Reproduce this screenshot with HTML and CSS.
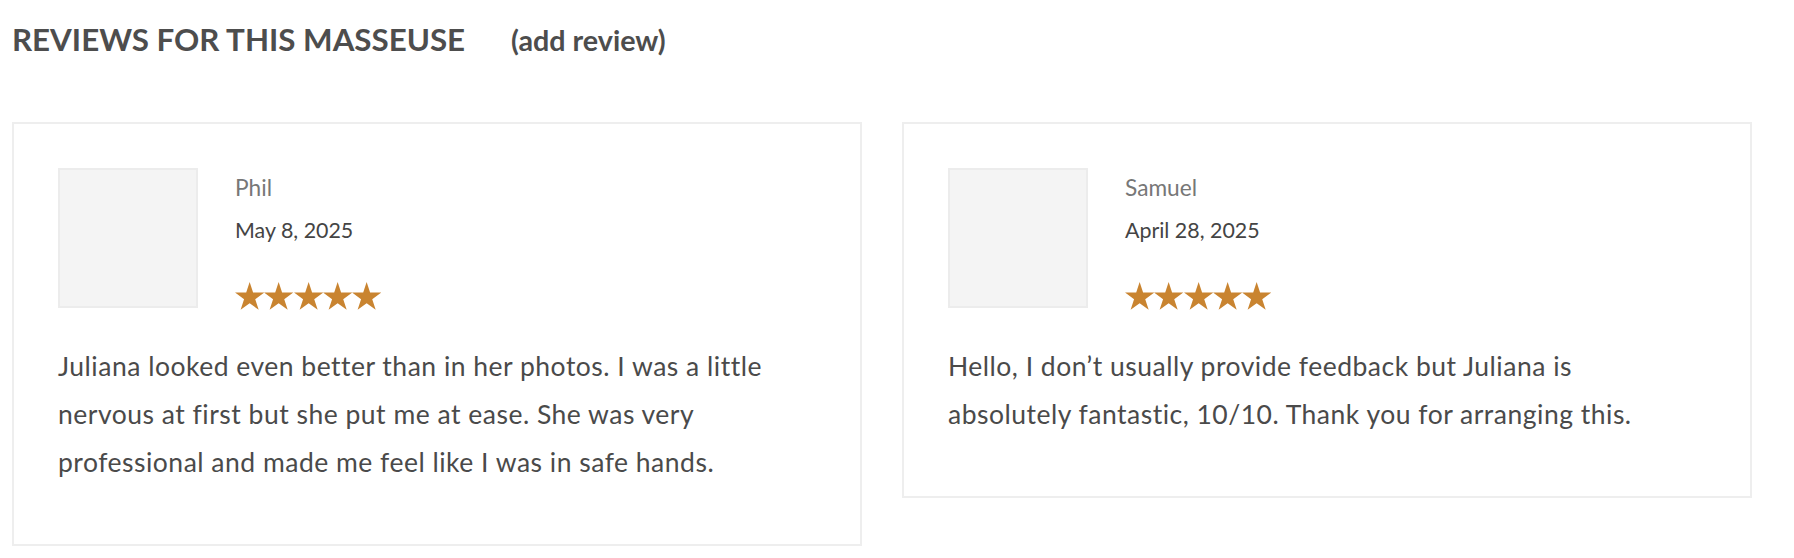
FILE: index.html
```html
<!DOCTYPE html>
<html lang="en">
<head>
<meta charset="utf-8">
<title>Reviews</title>
<link rel="stylesheet" href="styles.css">
</head>
<body>
<section class="reviews">
  <div class="reviews-head">
    <h2 class="reviews-title">REVIEWS FOR THIS MASSEUSE</h2>
    <a class="add-review" href="#">(add review)</a>
  </div>
  <div class="reviews-grid">
    <article class="review-card">
      <div class="review-top">
        <div class="avatar"></div>
        <div class="meta">
          <div class="name">Phil</div>
          <div class="date">May 8, 2025</div>
          <div class="stars">
            <svg viewBox="0 0 100 95.1"><polygon points="50,0 61.8,36.32 100,36.32 69.1,58.78 80.9,95.1 50,72.65 19.1,95.1 30.9,58.78 0,36.32 38.2,36.32"/></svg>
            <svg viewBox="0 0 100 95.1"><polygon points="50,0 61.8,36.32 100,36.32 69.1,58.78 80.9,95.1 50,72.65 19.1,95.1 30.9,58.78 0,36.32 38.2,36.32"/></svg>
            <svg viewBox="0 0 100 95.1"><polygon points="50,0 61.8,36.32 100,36.32 69.1,58.78 80.9,95.1 50,72.65 19.1,95.1 30.9,58.78 0,36.32 38.2,36.32"/></svg>
            <svg viewBox="0 0 100 95.1"><polygon points="50,0 61.8,36.32 100,36.32 69.1,58.78 80.9,95.1 50,72.65 19.1,95.1 30.9,58.78 0,36.32 38.2,36.32"/></svg>
            <svg viewBox="0 0 100 95.1"><polygon points="50,0 61.8,36.32 100,36.32 69.1,58.78 80.9,95.1 50,72.65 19.1,95.1 30.9,58.78 0,36.32 38.2,36.32"/></svg>
          </div>
        </div>
      </div>
      <p class="review-text">Juliana looked even better than in her photos. I was a little nervous at first but she put me at ease. She was very professional and made me feel like I was in safe hands.</p>
    </article>
    <article class="review-card">
      <div class="review-top">
        <div class="avatar"></div>
        <div class="meta">
          <div class="name">Samuel</div>
          <div class="date">April 28, 2025</div>
          <div class="stars">
            <svg viewBox="0 0 100 95.1"><polygon points="50,0 61.8,36.32 100,36.32 69.1,58.78 80.9,95.1 50,72.65 19.1,95.1 30.9,58.78 0,36.32 38.2,36.32"/></svg>
            <svg viewBox="0 0 100 95.1"><polygon points="50,0 61.8,36.32 100,36.32 69.1,58.78 80.9,95.1 50,72.65 19.1,95.1 30.9,58.78 0,36.32 38.2,36.32"/></svg>
            <svg viewBox="0 0 100 95.1"><polygon points="50,0 61.8,36.32 100,36.32 69.1,58.78 80.9,95.1 50,72.65 19.1,95.1 30.9,58.78 0,36.32 38.2,36.32"/></svg>
            <svg viewBox="0 0 100 95.1"><polygon points="50,0 61.8,36.32 100,36.32 69.1,58.78 80.9,95.1 50,72.65 19.1,95.1 30.9,58.78 0,36.32 38.2,36.32"/></svg>
            <svg viewBox="0 0 100 95.1"><polygon points="50,0 61.8,36.32 100,36.32 69.1,58.78 80.9,95.1 50,72.65 19.1,95.1 30.9,58.78 0,36.32 38.2,36.32"/></svg>
          </div>
        </div>
      </div>
      <p class="review-text">Hello, I don’t usually provide feedback but Juliana is absolutely fantastic, 10/10. Thank you for arranging this.</p>
    </article>
  </div>
</section>
</body>
</html>
```
FILE: styles.css
```css
html, body {
  margin: 0;
  padding: 0;
  background: #ffffff;
}

body {
  font-family: Lato, "Open Sans", "Liberation Sans", sans-serif;
  color: #4a4a4a;
}

.reviews {
  width: 1740px;
  padding: 21px 0 0 12px;
}

.reviews-head {
  display: flex;
  align-items: baseline;
  gap: 46px;
  height: 36px;
}

.reviews-title {
  margin: 0;
  font-size: 31.3px;
  line-height: 36px;
  font-weight: 700;
  color: #4d4d4d;
}

.add-review {
  font-size: 28.7px;
  line-height: 36px;
  font-weight: 700;
  color: #4d4d4d;
  text-decoration: none;
}

.reviews-grid {
  display: grid;
  grid-template-columns: 850px 850px;
  column-gap: 40px;
  align-items: start;
  margin-top: 65px;
}

.review-card {
  border: 2px solid #eeeeee;
  padding: 44px;
}

.review-top {
  display: flex;
  align-items: flex-start;
  gap: 37px;
}

.avatar {
  width: 136px;
  height: 136px;
  background: #f4f4f4;
  border: 2px solid #ececec;
  flex: none;
}

.meta {
  display: flex;
  flex-direction: column;
}

.name {
  font-size: 22.7px;
  line-height: 40px;
  color: #777777;
}

.date {
  font-size: 21.4px;
  line-height: 40px;
  margin-top: 2px;
  color: #444444;
}

.stars {
  display: flex;
  margin-top: 32px;
  height: 27px;
}

.stars svg {
  width: 29.3px;
  height: 27.8px;
  fill: #c98430;
  display: block;
}

.review-text {
  max-width: 720px;
  margin: 33px 0 14px 0;
  font-size: 26.5px;
  letter-spacing: 0.5px;
  line-height: 48px;
  color: #4a4a4a;
}
```
